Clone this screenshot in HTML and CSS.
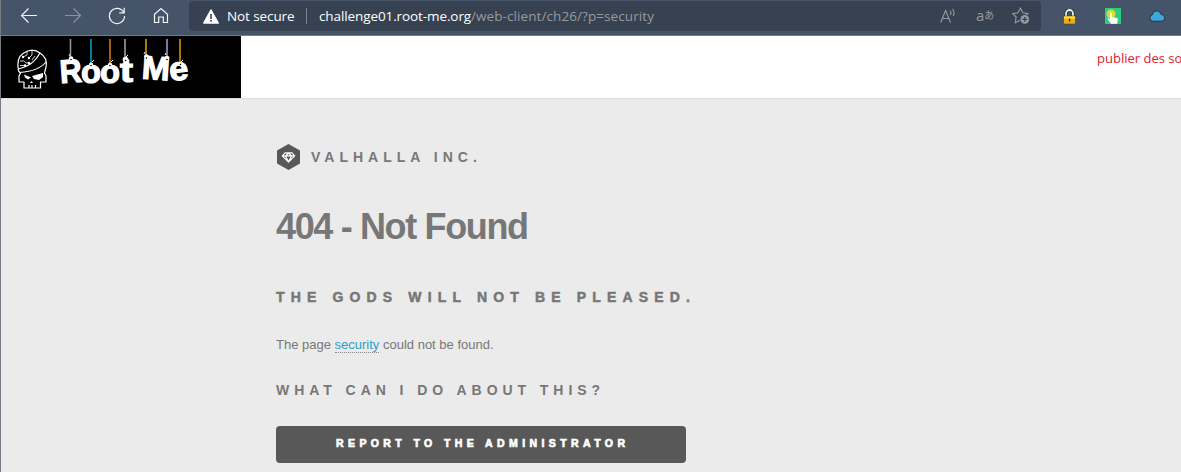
FILE: index.html
```html
<!DOCTYPE html>
<html lang="en">
<head>
<meta charset="utf-8">
<title>404 - Not Found</title>
<link rel="stylesheet" href="styles.css">
</head>
<body>
<div class="toolbar">
  <nav class="nav">
    <svg class="icon" viewBox="0 0 18 18"><path d="M17 8.500H1.500M8.500 1.500l-7 7 7 7"/></svg>
    <svg class="icon dim" viewBox="0 0 18 18"><path d="M1 8.500H16.500M9.500 1.500l7 7-7 7"/></svg>
    <svg class="icon" viewBox="0 0 18 18"><path d="M15.800 5.500A7.600 7.600 0 1 0 16.600 9M16.200 .8V5.800H11.200"/></svg>
    <svg class="icon" viewBox="0 0 18 18"><path d="M2.500 7.300L9 1.500l6.500 5.800V15.500H11.300V10H6.700v5.500H2.500z"/></svg>
  </nav>
  <div class="address">
    <svg class="warn" viewBox="0 0 16 15"><path fill="#fff" stroke="#fff" stroke-width="1.500" stroke-linejoin="round" d="M8 1L15.200 14H.8z"/><path fill="#364252" d="M7.200 5h1.600v5H7.200zM7.200 11h1.600v1.700H7.200z"/></svg>
    <span class="secure">Not secure</span>
    <span class="divider"></span>
    <span class="url"><span class="host">challenge01.root-me.org</span>/web-client/ch26/?p=security</span>
    <div class="actions">
      <svg class="read" viewBox="0 0 17 16"><path d="M.7 14.500L5.600 2.500l4.900 12M2.400 10.500h6.400M10 2.500q1.500 2 .5 4.500M12.500 1q2.500 3 .8 7"/></svg>
      <span class="lang"><span class="latin">a</span><span class="kana">あ</span></span>
      <svg class="star" viewBox="0 0 18 18"><path d="M8 13.200L3.300 15.800l.8-5.800L.8 6.700l5-.9L8.500 1.200l2.300 4.600 5 .8-1.500 1.400"/><circle cx="12.800" cy="12.400" r="4.300" class="badge"/><path class="plus" d="M10.500 12.400h4.600M12.800 10.100v4.600"/></svg>
    </div>
  </div>
  <div class="extensions">
    <svg class="lock" viewBox="0 0 13 16"><path d="M3 8V4.500a3.500 3.500 0 0 1 7 0V8" fill="none" stroke="#222" stroke-width="3"/><path d="M3 8V4.500a3.500 3.500 0 0 1 7 0V8" fill="none" stroke="#eee" stroke-width="1.800"/><path fill="#edae15" stroke="#4e4327" stroke-width=".6" d="M.6 7h11.800v8H.6z"/><path fill="#ffe249" d="M1 7.500h11v2H1z"/><path fill="#46391b" d="M5.800 9.500h1.500v3H5.800z"/></svg>
    <svg class="touch" viewBox="0 0 16 16"><path fill="#2ecc80" d="M0 0h16v16H0z"/><circle cx="6" cy="6" r="4.500" fill="#d4df2d"/><path fill="#fff" d="M5 5q1-1.300 2 0v4l4.800 1q1.300.3 1 2L12 15.700H6L2.500 11q.5-1.300 2.500.2z"/></svg>
    <svg class="cloud" viewBox="0 0 16 12"><path fill="#42a5dc" stroke="#17242f" stroke-width=".8" d="M3.500 11.200a3.200 3.200 0 0 1-.3-6.200Q4 1 7.500.8t4.400 3.400q3.600.2 3.700 3.500t-3 3.500z"/></svg>
  </div>
</div>
<div class="page">
  <header class="site-header">
    <svg class="logo" viewBox="0 0 240 62">
      <path fill="#000" d="M0 0h240v62H0z"/>
      <g fill="none" stroke="#fff" stroke-width="1.200" stroke-linejoin="round">
        <path d="M17.500 35Q15 22 22 17.500Q31 11 39 17Q47 22 45 31L43.500 37 45 40V46H39.500V52H23V46H18V40L19.500 37Z"/>
        <path d="M17.500 33Q32 30 39 17M18.500 36.500Q38 35 45 26M28 49v3M31 49v3M34.500 49v3"/>
        <path d="M19 25h4l2 2h3M19 29.500h5M26 15v4l-4 2M31 14v5l-3 3M31 24l3-4" stroke-width=".8"/>
        <path fill="#fff" d="M31 40l11-3v4l-4 3-5-1zM23 38.500l7 3-3 2-3-2zM29 47l1.500-2 1.500 2z" stroke="none"/>
        <g fill="#fff" stroke="none"><circle cx="28" cy="27" r="1.200"/><circle cx="24" cy="29.500" r="1.200"/><circle cx="22" cy="21" r="1.200"/><circle cx="28" cy="22" r="1.200"/></g>
      </g>
      <g stroke-width="1.500"><path stroke="#999" d="M69.500 3v22"/><path stroke="#00a9d2" d="M90 3v27"/><path stroke="#de7b16" d="M109 3v27"/><path stroke="#aaa" d="M124 3v22"/><path stroke="#e0a10b" d="M145 3v18"/><path stroke="#aa9ee1" d="M166 3v20"/><path stroke="#e59c00" d="M179 3v26"/></g>
      <g class="letters"><text x="59" y="46.500" font-size="33" textLength="22" lengthAdjust="spacingAndGlyphs" transform="rotate(-4 70 38)">R</text><text x="80" y="46.500" font-size="33" textLength="20" lengthAdjust="spacingAndGlyphs">o</text><text x="99" y="46.500" font-size="33" textLength="20" lengthAdjust="spacingAndGlyphs">o</text><text x="119" y="45.500" font-size="33" textLength="13" lengthAdjust="spacingAndGlyphs">t</text><text x="141" y="43.500" font-size="33" textLength="28" lengthAdjust="spacingAndGlyphs" transform="rotate(4 155 32)">M</text><text x="168.500" y="44" font-size="33" textLength="19" lengthAdjust="spacingAndGlyphs" transform="rotate(-6 179 37)">e</text></g>
      <g fill="#fff"><circle cx="70" cy="22.500" r="2.300"/><circle cx="90" cy="28.500" r="2"/><circle cx="109" cy="28.500" r="2"/><circle cx="124.500" cy="23.500" r="2.800"/><circle cx="145.500" cy="20.500" r="2.300"/><circle cx="166" cy="22" r="2.300"/><circle cx="179.500" cy="28" r="2"/></g>
      <g fill="none" stroke="#fff"><path d="M69 18l-1 2M91 26l2-2M110 26l2-2M125 21l2-2M144 16l-1 2M165 17l-1 2M180 26l2-2"/></g>
      <g fill="#000"><circle cx="70" cy="23.500" r=".8"/><circle cx="90" cy="29.500" r=".8"/><circle cx="109" cy="29.500" r=".8"/><circle cx="124.500" cy="24.500" r=".8"/><circle cx="145.500" cy="22" r=".8"/><circle cx="166" cy="23.500" r=".8"/><circle cx="179.500" cy="28.500" r=".8"/></g>
    </svg>
    <a class="publish">publier des so</a>
  </header>
  <main class="content">
    <div class="brand">
      <svg class="gem" viewBox="0 0 24 26"><path fill="#585858" d="M12 0l11.500 6.500v13L12 26 .5 19.500v-13z"/><path fill="none" stroke="#fff" stroke-width="1.200" stroke-linejoin="round" d="M8.500 8.800h7l2.700 3L12 18.200 5.800 11.800zM5.800 11.800h12.400M9 12l3 6 3-6-3-3z"/></svg>
      <span class="brand-name">VALHALLA INC.</span>
    </div>
    <h1 class="title">404 - Not Found</h1>
    <h2 class="subtitle">THE GODS WILL NOT BE PLEASED.</h2>
    <p class="message">The page <a class="term">security</a> could not be found.</p>
    <h3 class="question">WHAT CAN I DO ABOUT THIS?</h3>
    <a class="report">REPORT TO THE ADMINISTRATOR</a>
  </main>
</div>
</body>
</html>
```
FILE: styles.css
```css
* { box-sizing: border-box; }
body { margin: 0; height: 472px; overflow: hidden; background: #ebebeb; font-family: "Liberation Sans", Arial, sans-serif; color: #777; }
svg { display: block; flex: none; }
.toolbar { height: 36px; display: flex; align-items: flex-start; background: #455469; border-bottom: 1px solid #747b85; border-left: 1px solid #747b85; }
.nav { width: 188px; flex: none; display: flex; gap: 26px; padding: 7px 0 0 19px; }
.icon { width: 18px; height: 18px; fill: none; stroke: #f2f4f6; stroke-width: 1.2; }
.dim { stroke: #8b94a2; }
.address { width: 852px; height: 30px; margin-top: 1px; flex: none; display: flex; align-items: center; background: #364252; border-radius: 4px; padding: 0 11px 0 14px; font-family: "Open Sans", "Noto Sans", sans-serif; font-size: 13.5px; line-height: 30px; white-space: nowrap; }
.warn { width: 16px; height: 15px; }
.secure { width: 79px; margin-left: 8px; color: #fff; letter-spacing: -.1px; }
.divider { width: 1px; height: 16px; background: #7b838d; }
.url { margin-left: 12px; color: #969a9f; letter-spacing: .08px; }
.host { color: #fff; letter-spacing: -.1px; }
.actions { margin-left: auto; display: flex; align-items: center; color: #969a9f; }
.actions svg { fill: none; stroke: #969a9f; stroke-width: 1.1; }
.actions .badge { fill: #969a9f; stroke: none; }
.actions .plus { stroke: #364252; stroke-width: 1.3; }
.read { width: 17px; height: 16px; }
.lang { display: flex; width: 18px; margin: 0 18px 2px 19px; }
.latin { font-size: 15px; }
.kana { font: 10px/30px "Noto Sans CJK JP", sans-serif; }
.star { width: 18px; height: 18px; }
.extensions { display: flex; padding: 8px 0 0 22px; }
.lock { width: 13px; height: 16px; margin-top: 1px; }
.touch { width: 16px; height: 16px; margin-left: 29px; }
.cloud { width: 16px; height: 12px; margin: 2px 0 0 28px; }
.page { height: 436px; border-left: 1px solid #747b85; }
.site-header { height: 63px; display: flex; justify-content: space-between; background: #fff; border-bottom: 1px solid #ddd; overflow: hidden; }
.logo { width: 240px; height: 62px; }
.letters { fill: #fff; stroke: #fff; stroke-width: 1.2; font-family: "Liberation Sans", Arial, sans-serif; font-weight: bold; }
.publish { width: 84px; padding-top: 12px; color: #d9232b; font: 13px/20px "Open Sans", sans-serif; white-space: nowrap; }
.content { padding: 45px 0 0 275px; }
.brand { height: 26px; display: flex; align-items: center; }
.gem { width: 25px; height: 26px; }
.brand-name { margin-left: 10px; font-size: 14px; font-weight: bold; letter-spacing: 5px; }
.title { margin: 36px 0 0; font-size: 36px; line-height: 42px; letter-spacing: -1.35px; }
.subtitle { margin: 39px 0 0; font-size: 14px; line-height: 20px; letter-spacing: 6.15px; font-weight: bold; -webkit-text-stroke: .5px #777; }
.message { margin: 28px 0 0; font-size: 13px; line-height: 20px; }
.term { color: #2f9fc9; border-bottom: 1px dotted #888; }
.question { margin: 25px 0 0; font-size: 14px; line-height: 20px; letter-spacing: 4.95px; }
.report { display: block; width: 410px; height: 37px; margin-top: 26px; border-radius: 4px; background: #585858; color: #fff; font-size: 10.5px; font-weight: bold; line-height: 35px; letter-spacing: 4.4px; padding-left: 60px; -webkit-text-stroke: .7px #fff; white-space: nowrap; }
```
